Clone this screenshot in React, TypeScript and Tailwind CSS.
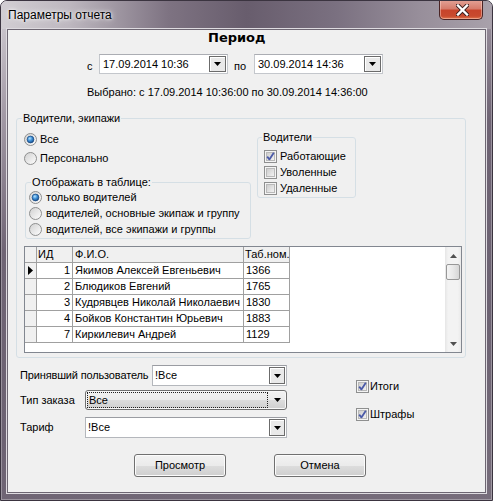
import React from 'react';

type Row = { id: number; name: string; tab: string };

const rows: Row[] = [
  { id: 1, name: 'Якимов Алексей Евгеньевич', tab: '1366' },
  { id: 2, name: 'Блюдиков Евгений', tab: '1765' },
  { id: 3, name: 'Кудрявцев Николай Николаевич', tab: '1830' },
  { id: 4, name: 'Бойков Константин Юрьевич', tab: '1883' },
  { id: 7, name: 'Киркилевич Андрей', tab: '1129' },
];

function Radio({ checked = false }: { checked?: boolean }) {
  return (
    <svg width="13" height="13" viewBox="0 0 13 13" className="shrink-0">
      <defs>
        <linearGradient id="radio-bg" x1="0" y1="0" x2="1" y2="1">
          <stop offset="0" stopColor="#cfcfcf" />
          <stop offset="1" stopColor="#ffffff" />
        </linearGradient>
        <radialGradient id="radio-dot" cx="0.4" cy="0.35" r="0.75">
          <stop offset="0" stopColor="#b4e3ff" />
          <stop offset="0.45" stopColor="#3d8fd6" />
          <stop offset="1" stopColor="#0f3f7a" />
        </radialGradient>
      </defs>
      <circle cx="6.5" cy="6.5" r="6" fill="url(#radio-bg)" stroke="#8e8f8f" />
      {checked && <circle cx="6.5" cy="6.5" r="3.4" fill="url(#radio-dot)" stroke="#17467f" strokeWidth="0.7" />}
    </svg>
  );
}

function Check({ checked = false }: { checked?: boolean }) {
  return (
    <svg width="13" height="13" viewBox="0 0 13 13" className="shrink-0">
      <defs>
        <linearGradient id="check-bg" x1="0" y1="0" x2="1" y2="1">
          <stop offset="0" stopColor="#cbcbcb" />
          <stop offset="1" stopColor="#f4f4f4" />
        </linearGradient>
      </defs>
      <rect x="0.5" y="0.5" width="12" height="12" fill="#f4f4f4" stroke="#8e8f8f" />
      <rect x="2.5" y="2.5" width="8" height="8" fill="url(#check-bg)" stroke="#b9b9b9" />
      {checked && (
        <path d="M3.2 6.6 L5.4 9.4 L9.8 2.8" fill="none" stroke="#4a5aa8" strokeWidth="1.8" strokeLinejoin="round" />
      )}
    </svg>
  );
}

function Arrow({ color = '#000' }: { color?: string }) {
  return (
    <svg width="7" height="4" viewBox="0 0 7 4">
      <path d="M0 0h7L3.5 4z" fill={color} />
    </svg>
  );
}

function DropButton({ className }: { className: string }) {
  return (
    <div
      className={`${className} flex items-center justify-center border border-[#6b6b6b] bg-[#e9e9e9] shadow-[inset_1px_1px_0_#ffffff]`}
    >
      <Arrow />
    </div>
  );
}

function DateBox({ value }: { value: string }) {
  return (
    <div className="flex w-[129px] h-[20px] border border-[#c4c7cc] border-t-[#abadb3] bg-white p-px">
      <span className="flex-1 self-center pl-[2px]">{value}</span>
      <DropButton className="w-[17px]" />
    </div>
  );
}

function Combo({ value, width }: { value: string; width: string }) {
  return (
    <div className={`${width} flex h-[21px] border border-[#b4b7bc] border-t-[#9a9ca2] bg-white p-px`}>
      <span className="flex-1 self-center pl-[1px]">{value}</span>
      <DropButton className="w-[16px]" />
    </div>
  );
}

function ThemedCombo({ value }: { value: string }) {
  return (
    <div className="flex w-[202px] h-[20px] items-center rounded-[3px] border border-[#707070] bg-[linear-gradient(180deg,#f2f2f2_0%,#ebebeb_50%,#dddddd_51%,#cfcfcf_100%)] shadow-[inset_0_0_0_1px_#f8f8f8] pl-px pr-[4px]">
      <div className="flex-1 h-[16px] border border-dotted border-[#202020] pl-px leading-[14px]">{value}</div>
      <div className="w-[14px] flex justify-end pr-px">
        <Arrow />
      </div>
    </div>
  );
}

function Button({ children }: { children: React.ReactNode }) {
  return (
    <button className="w-[92px] h-[23px] rounded-[3px] border border-[#707070] bg-[linear-gradient(180deg,#f2f2f2_0%,#ebebeb_50%,#dddddd_51%,#cfcfcf_100%)] shadow-[inset_0_0_0_1px_#fcfcfc] text-[11px] text-black">
      {children}
    </button>
  );
}

export default function App() {
  return (
    <div className="w-[493px] h-[501px] flex flex-col rounded-t-[7px] border border-[#3b3440] bg-[linear-gradient(165deg,#d4d0d6_0%,#a39aa6_18%,#6f6474_40%,#6c6272_70%,#776d7b_100%)] shadow-[inset_0_0_0_1px_rgba(255,255,255,0.3)] overflow-hidden font-['Liberation_Sans',Arial,sans-serif]">
      {/* title bar */}
      <div className="h-[28px] flex items-start justify-between bg-[linear-gradient(90deg,#d2ced3_0%,#bdb7bf_14%,#7e7382_34%,#685d6d_50%,#7a7080_68%,#978e9a_85%,#a9a1ab_100%)]">
        <span className="pl-[7px] pt-[7px] text-[12px] leading-[15px] text-black [text-shadow:0_0_6px_#ffffff,0_0_3px_#ffffff]">
          Параметры отчета
        </span>
        <div className="-mt-px mr-[9px] w-[44px] h-[20px] flex items-center justify-center rounded-b-[5px] border border-t-0 border-[#4b2424] bg-[linear-gradient(180deg,#e3a397_0%,#d67c6c_45%,#c7442b_55%,#c84a2e_85%,#e0764e_100%)] shadow-[inset_0_0_0_1px_rgba(255,220,210,0.45)]">
          <svg width="13" height="12" viewBox="0 0 13 12" className="ml-[2px]">
            <path d="M2 1.5 L11 10.5 M11 1.5 L2 10.5" stroke="#3c2020" strokeWidth="4.2" strokeLinecap="square" />
            <path d="M2 1.5 L11 10.5 M11 1.5 L2 10.5" stroke="#ffffff" strokeWidth="2.4" strokeLinecap="square" />
          </svg>
        </div>
      </div>

      {/* client area */}
      <div className="mx-[6px] w-[479px] h-[464px] flex flex-col border border-[#6d6672] bg-[#f0f0f0] shadow-[0_0_0_1px_#dedbe0] text-[11px] leading-[13px] text-black">
        <div className="h-[16px] pl-[200px] font-['DejaVu_Sans',sans-serif] font-bold text-[13px] leading-[16px]">
          Период
        </div>

        <div className="mt-[8px] flex h-[20px] pl-[79px]">
          <span className="w-[12px] pt-[6px]">с</span>
          <DateBox value="17.09.2014 10:36" />
          <span className="w-[26px] pl-[6px] pt-[6px]">по</span>
          <DateBox value="30.09.2014 14:36" />
        </div>

        <div className="mt-[12px] pl-[79px]">Выбрано: с 17.09.2014 10:36:00 по 30.09.2014 14:36:00</div>

        <fieldset className="mt-[13px] ml-[8px] w-[450px] rounded-[3px] border border-[#d5dfe5] pb-[4px]">
          <legend className="ml-[5px] px-px leading-[13px]">Водители, экипажи</legend>
          <div className="flex items-start">
            <div className="w-[233px] pl-[7px] pt-[6px]">
              <div className="flex h-[16px] items-center gap-[3px]">
                <Radio checked />
                <span>Все</span>
              </div>
              <div className="mt-[3px] flex h-[16px] items-center gap-[3px]">
                <Radio />
                <span>Персонально</span>
              </div>
              <fieldset className="mt-[10px] ml-px w-[226px] rounded-[3px] border border-[#d5dfe5] pb-px">
                <legend className="ml-[5px] px-px leading-[13px]">Отображать в таблице:</legend>
                {[
                  ['только водителей', true],
                  ['водителей, основные экипаж и группу', false],
                  ['водителей, все экипажи и группы', false],
                ].map(([label, on]) => (
                  <div key={label as string} className="flex h-[16px] items-center gap-[4px] pl-[3px]">
                    <Radio checked={on as boolean} />
                    <span>{label as string}</span>
                  </div>
                ))}
              </fieldset>
            </div>

            <fieldset className="mt-[6px] ml-[7px] w-[99px] rounded-[3px] border border-[#d5dfe5] pt-[4px] pb-px">
              <legend className="ml-[4px] px-px leading-[13px]">Водители</legend>
              {[
                ['Работающие', true],
                ['Уволенные', false],
                ['Удаленные', false],
              ].map(([label, on]) => (
                <div key={label as string} className="flex h-[16px] items-center gap-[3px] pl-[6px]">
                  <Check checked={on as boolean} />
                  <span>{label as string}</span>
                </div>
              ))}
            </fieldset>
          </div>

          {/* grid */}
          <div className="mt-[7px] ml-[7px] w-[438px] h-[107px] flex border border-[#828790] bg-white">
            <div className="flex-1">
              <div className="grid grid-cols-[12px_36px_171px_46px]">
                <div className="h-[16px] border-r border-b border-[#a0a0a0] bg-[#f0f0f0]" />
                <div className="h-[16px] border-r border-b border-[#a0a0a0] bg-[#f0f0f0] px-[1px] leading-[15px]">ИД</div>
                <div className="h-[16px] border-r border-b border-[#a0a0a0] bg-[#f0f0f0] px-[2px] leading-[15px]">Ф.И.О.</div>
                <div className="h-[16px] border-r border-b border-[#a0a0a0] bg-[#f0f0f0] px-[1px] leading-[15px]">Таб.ном.</div>
                {rows.map((r, i) => (
                  <React.Fragment key={r.id}>
                    <div className="h-[16px] flex items-center pl-[3px] border-r border-b border-[#a0a0a0] bg-[#f0f0f0]">
                      {i === 0 && (
                        <svg width="5" height="9" viewBox="0 0 5 9">
                          <path d="M0 0L5 4.5L0 9z" fill="#000" />
                        </svg>
                      )}
                    </div>
                    <div className="h-[16px] border-r border-b border-[#a0a0a0] pr-[2px] text-right leading-[15px]">{r.id}</div>
                    <div className="h-[16px] border-r border-b border-[#a0a0a0] px-[2px] leading-[15px] whitespace-nowrap overflow-hidden">
                      {r.name}
                    </div>
                    <div className="h-[16px] border-r border-b border-[#a0a0a0] px-[2px] leading-[15px]">{r.tab}</div>
                  </React.Fragment>
                ))}
              </div>
            </div>
            {/* scrollbar */}
            <div className="w-[16px] flex flex-col bg-[linear-gradient(90deg,#e6e6e6_0%,#f3f3f3_20%,#f3f3f3_80%,#e9e9e9_100%)]">
              <div className="h-[17px] flex items-center justify-center">
                <div className="rotate-180">
                  <Arrow color="#505050" />
                </div>
              </div>
              <div className="mx-px h-[16px] rounded-[2px] border border-[#979797] bg-[linear-gradient(90deg,#f4f4f4_0%,#e8e8e8_50%,#d6d6d6_100%)]" />
              <div className="flex-1" />
              <div className="h-[17px] flex items-center justify-center">
                <Arrow color="#505050" />
              </div>
            </div>
          </div>
        </fieldset>

        {/* bottom fields */}
        <div className="flex">
          <div className="pl-[12px] pt-[7px]">
            <div className="flex items-center">
              <span className="w-[132px] whitespace-nowrap tracking-[-0.15px]">Принявший пользователь</span>
              <Combo value="!Все" width="w-[135px]" />
            </div>
            <div className="mt-[4px] flex items-center">
              <span className="w-[65px]">Тип заказа</span>
              <ThemedCombo value="Все" />
            </div>
            <div className="mt-[7px] flex items-center">
              <span className="w-[65px]">Тариф</span>
              <Combo value="!Все" width="w-[202px]" />
            </div>
          </div>
          <div className="ml-[69px] pt-[20px]">
            <div className="flex h-[16px] items-center gap-[1px]">
              <Check checked />
              <span>Итоги</span>
            </div>
            <div className="mt-[12px] flex h-[16px] items-center gap-[1px]">
              <Check checked />
              <span>Штрафы</span>
            </div>
          </div>
        </div>

        <div className="mt-[16px] flex gap-[48px] pl-[126px]">
          <Button>Просмотр</Button>
          <Button>Отмена</Button>
        </div>
      </div>
    </div>
  );
}
